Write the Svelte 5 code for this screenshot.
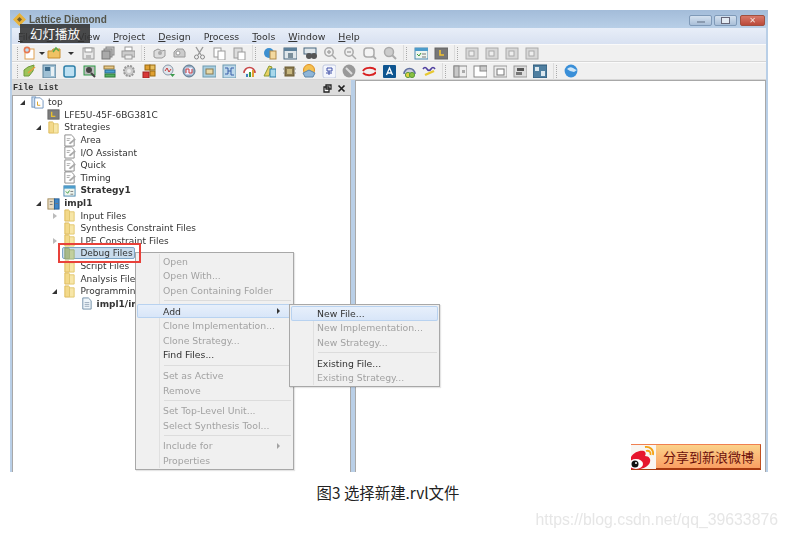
<script>
    const g = "#9a9a9a"
    const rect = (x, y, w, h, f, s = "none") => `<rect x="${x}" y="${y}" width="${w}" height="${h}" fill="${f}" stroke="${s}"/>`

    const icons = {
        newfile: rect(3, 3, 9, 10, "#fff", "#e0a050") + `<circle cx="5" cy="4" r="3.4" fill="#e87850"/><circle cx="5" cy="4" r="1.8" fill="#bfe0f5"/>`,
        open: `<path d="M1 5h4l1-2h7v9H1z" fill="#f0c264" stroke="#c98e2e"/><path d="M6 6l3-4 3 3" fill="none" stroke="#5aa84a" stroke-width="1.6"/>`,
        arrow: `<path d="M4 6h6l-3 3z" fill="#333"/>`,
        save: rect(2, 2, 11, 11, "#e8e8e8", g) + rect(4, 2, 7, 4, "#fff", g) + rect(5, 9, 5, 4, "#bbb"),
        saveall: rect(5, 1, 8, 8, "#ccc", "#888") + rect(3, 3, 8, 8, "#bbb", "#888") + rect(1, 5, 8, 8, "#aaa", "#777"),
        print: rect(4, 1, 7, 4, "#fff", g) + rect(1, 5, 13, 6, "#ccc", g) + rect(4, 9, 7, 4, "#eee", g),
        gear1: `<path d="M2 11V5l4-2 4 2 3-1v6l-3 2H4z" fill="#ddd" stroke="${g}"/><circle cx="8" cy="7" r="2" fill="#aaa"/>`,
        gear2: `<path d="M2 6l3-3h6l2 3v5H2z" fill="#ccc" stroke="${g}"/><circle cx="6" cy="7" r="2" fill="#fff" stroke="${g}"/>`,
        cut: `<path d="M4 1l5 8M11 1L6 9" stroke="#999" stroke-width="1.4" fill="none"/><circle cx="4.500" cy="11" r="2" fill="none" stroke="#888"/><circle cx="10.500" cy="11" r="2" fill="none" stroke="#888"/>`,
        copy: rect(2, 2, 7, 9, "#fff", g) + rect(6, 5, 7, 9, "#fff", g),
        paste: rect(2, 2, 8, 10, "#ddd", g) + rect(6, 6, 7, 8, "#fff", g),
        globefile: `<circle cx="6" cy="7" r="5" fill="#3d8fd0"/>` + rect(7, 5, 6, 8, "#f3d9a0", "#b08a4a"),
        board: rect(1, 2, 13, 11, "#dfe6ea", "#49677f") + rect(1, 2, 13, 3, "#5c7f99") + rect(5, 7, 5, 5, "#7b8f9b"),
        binoc: rect(1, 2, 12, 6, "#dfe6ea", "#49677f") + `<circle cx="6" cy="10" r="3" fill="#555"/><circle cx="11" cy="10" r="3" fill="#555"/>`,
        zoomin: `<circle cx="6" cy="6" r="4.200" fill="#eee" stroke="#aaa" stroke-width="1.500"/><path d="M9 9l4 4M4 6h4M6 4v4" stroke="#aaa" stroke-width="1.500"/>`,
        zoomout: `<circle cx="6" cy="6" r="4.200" fill="#eee" stroke="#aaa" stroke-width="1.500"/><path d="M9 9l4 4M4 6h4" stroke="#aaa" stroke-width="1.500"/>`,
        zoomfit: `<rect x="1" y="2" width="10" height="9" rx="3" fill="#f4f4f4" stroke="#aaa" stroke-width="1.500"/><path d="M10 10l3 3" stroke="#aaa" stroke-width="1.800"/>`,
        zoomsel: `<circle cx="6" cy="6" r="4.500" fill="#ccc" stroke="#aaa" stroke-width="1.500"/><path d="M9 9l4 4" stroke="#aaa" stroke-width="2"/>`,
        check: rect(1, 2, 13, 11, "#eef5ee", "#4a88b0") + rect(1, 2, 13, 3, "#4c9ccb") + `<path d="M3 8l2 2 2-3" stroke="#3a9a3a" fill="none"/><path d="M8 8h4M8 11h4" stroke="#777"/>`,
        chip: rect(1, 2, 13, 11, "#777", "#666") + `<path d="M6 4v5h4" stroke="#f2c230" stroke-width="1.600" fill="none"/>`,
        ghost: rect(1, 2, 12, 11, "#d8d8d8", "#aaa") + rect(4, 5, 5, 5, "#eee", "#aaa"),
        pencil: `<path d="M2 12V6l4-3 6-2-1 6-4 5z" fill="#9dc45a" stroke="#6f9a3a"/><path d="M6 9l7-6" stroke="#e8a040" stroke-width="1.600"/>`,
        pins: rect(1, 1, 13, 13, "#9fc0d4", "#5d8199") + rect(3, 3, 5, 4, "#3d6a8a") + rect(9, 3, 3, 9, "#e8f0f4"),
        blue: `<rect x="2" y="2" width="11" height="11" rx="2" fill="#bde0f2" stroke="#2d7fa8" stroke-width="1.500"/>`,
        scope: rect(2, 2, 11, 9, "#bbb", "#2c9a45") + `<circle cx="7" cy="6" r="3" fill="#444"/><path d="M9 9l4 4" stroke="#444" stroke-width="2"/>`,
        stack: rect(2, 2, 10, 3, "#e6c98a", "#997a3a") + rect(3, 6, 10, 3, "#4aa0d0", "#2a6a90") + rect(3, 10, 10, 3, "#55b060", "#2c7a3a"),
        cog: `<circle cx="7" cy="7" r="5" fill="#ccc" stroke="#999" stroke-width="2" stroke-dasharray="2 1"/><circle cx="7" cy="7" r="2" fill="#eee"/>`,
        blocks: rect(3, 1, 5, 5, "#e0a030", "#9a6a10") + rect(8, 1, 5, 5, "#e8c060", "#9a6a10") + rect(8, 7, 5, 5, "#e0a030", "#9a6a10") + rect(1, 8, 6, 6, "#d83838", "#a02020"),
        wave: `<circle cx="6" cy="6" r="5" fill="#dfe4ea" stroke="#8a9aaa"/><path d="M3 7l2-3 2 4 2-3" stroke="#c83838" fill="none"/><path d="M8 10h5l-2.500 3z" fill="#3a9a4a"/>`,
        wave2: `<circle cx="7" cy="7" r="6" fill="#8fa8bf" stroke="#60788f"/><rect x="3.500" y="3.500" width="7" height="7" fill="#eef"/><path d="M4 9V5h3v4h3V5" stroke="#c83838" fill="none"/>`,
        panel: rect(1, 2, 13, 11, "#a9cfe0", "#6d9ab0") + rect(4, 5, 7, 5, "#e8d9a8", "#8a7a50"),
        grid: rect(1, 1, 13, 13, "#bcd8ea", "#6d9ab0") + `<path d="M3 4h3v3h3V4h3M3 10h3V7M9 7v4h3" stroke="#3b5fa8" fill="none"/>`,
        gauge: `<path d="M2 9a5.500 5.500 0 0 1 11 0" fill="#fff" stroke="#c84848" stroke-width="1.600"/>` + rect(7, 8, 2, 5, "#3a9a3a") + rect(10, 6, 2, 7, "#e0a030") + rect(4, 10, 2, 3, "#3d7fc0"),
        draw: `<path d="M2 12L7 2l3 1-3 9z" fill="#e8d060" stroke="#8a9a30"/>` + rect(8, 5, 6, 8, "#a8d8ea", "#2d7fa8"),
        cpu: rect(3, 3, 9, 9, "#8a7a50", "#6a5a30") + rect(5, 5, 5, 5, "#c8b880") + `<path d="M1 5h2M1 9h2M12 5h2M12 9h2" stroke="#999"/>`,
        sun: `<circle cx="7" cy="6" r="5.500" fill="#f4c050" stroke="#e09020"/><path d="M1 9l6-3 6 3-2 4H3z" fill="#8fb6d8" stroke="#5d86a8"/>`,
        star: `<rect x="1" y="1" width="13" height="13" rx="2" fill="#f4f6fc" stroke="#c0c8e0"/><path d="M5 4h5v3H5zM7 7v4M4 9h6" stroke="#4050a8" fill="none"/>`,
        wrench: `<circle cx="7" cy="7" r="6.400" fill="#999"/><path d="M4 4l6 6" stroke="#ddd" stroke-width="2"/>`,
        swirl: `<path d="M1 7c2-4 10-4 13-1" fill="none" stroke="#d82020" stroke-width="2"/><path d="M14 8c-2 4-10 4-13 1" fill="none" stroke="#d82020" stroke-width="2"/>`,
        letter: `<rect x="1" y="1" width="13" height="13" rx="1" fill="#0e5590"/><path d="M4.500 11l3-7 3 7M5.500 9h4" stroke="#fff" stroke-width="1.300" fill="none"/>`,
        dome: `<path d="M2 10a5.500 5.500 0 0 1 11 0" fill="#ccd" stroke="#6070a0" stroke-width="1.500"/><circle cx="6" cy="11" r="2.600" fill="#e0d040" stroke="#5a9a3a"/><circle cx="10" cy="11" r="2.600" fill="#8ac040" stroke="#5a9a3a"/>`,
        squiggle: `<path d="M1 5q2-3 4 0t4 0 4 0" fill="none" stroke="#5040a0" stroke-width="1.600"/><path d="M3 11l9-4" stroke="#e8c830" stroke-width="2.400"/>`,
        split1: rect(1, 2, 13, 11, "#eee", "#888") + rect(1, 2, 5, 11, "#c8c8c8", "#888") + rect(9, 6, 3, 3, "#aaa"),
        split2: rect(1, 2, 13, 11, "#fff", "#888") + rect(7, 2, 7, 5, "#ccc", "#888"),
        split3: rect(1, 2, 13, 11, "#eee", "#999") + rect(4, 5, 7, 6, "#fff", "#777"),
        split4: rect(1, 2, 13, 11, "#ddd", "#999") + rect(4, 4, 7, 3, "#555") + rect(3, 8, 6, 3, "#777"),
        split5: rect(0, 1, 14, 13, "#4f7fa0", "#2d5878") + rect(2, 3, 4, 4, "#dce8ef") + rect(8, 7, 4, 5, "#dce8ef"),
        earth: `<circle cx="7" cy="7" r="6.400" fill="#3a8fd8"/><path d="M3 5q3-3 6-1t4 2l-3 2-4-1z" fill="#cfe6f7"/>`,
        // tree icons
        folder: `<path d="M2 1h4l1 1v11H2z" fill="#f3d98a" stroke="#dcb95a"/><path d="M7 3h5v10H7z" fill="#f7e6a8" stroke="#e2c76e"/>`,
        folderSel: `<path d="M2 1h4l1 1v11H2z" fill="#a7b98a" stroke="#8a9f6a"/><path d="M7 3h5v10H7z" fill="#c2cf9e" stroke="#a1b27c"/>`,
        topdoc: rect(1, 1, 4, 11, "#cfe0f2", "#6f94bd") + `<path d="M4 2h6l3 3v8H4z" fill="#fff" stroke="#6f94bd"/><path d="M7 6v4h3" stroke="#d9a020" fill="none"/>`,
        device: rect(1, 2, 12, 10, "#7d7d7d", "#666") + `<path d="M5 4v5h4" stroke="#e8c030" stroke-width="1.500" fill="none"/>`,
        strat: `<path d="M2 1h7l3 3v9H2z" fill="#fff" stroke="#888"/><path d="M6 10l6-5 2 1-6 5z" fill="#aaa"/><path d="M4 5h4M4 7h3" stroke="#aaa"/>`,
        stratOn: rect(1, 2, 12, 11, "#eef5ee", "#4a88b0") + rect(1, 2, 12, 3, "#4c9ccb") + `<path d="M3 8l2 2 2-3" stroke="#3a9a3a" fill="none"/><path d="M8 8h3M8 11h3" stroke="#777"/>`,
        impl: rect(1, 2, 7, 11, "#e8dcc4", "#a08a5a") + rect(8, 2, 5, 11, "#3f86c8", "#2a6096") + `<path d="M3 5h3M3 8h3M9 7h3" stroke="#777"/>`,
        doc: `<path d="M3 1h6l3 3v9H3z" fill="#eef5fa" stroke="#6f8ea8"/><path d="M5 6h5M5 8h5M5 10h5" stroke="#9ab"/>`
    }

    const bar1 = [
        ["grip"], ["newfile"], ["arrow", "narrow"], ["open"], ["arrow", "wide"], ["save"], ["saveall"], ["print"], ["sep"], ["grip"],
        ["gear1"], ["gear2"], ["cut"], ["copy"], ["paste"], ["sep"], ["grip"],
        ["globefile"], ["board"], ["binoc"], ["zoomin"], ["zoomout"], ["zoomfit"], ["zoomsel"], ["sep"], ["grip"],
        ["check"], ["chip"], ["sep"], ["grip"], ["ghost"], ["ghost"], ["ghost"], ["ghost"]
    ]
    const bar2 = [
        ["grip"], ["pencil"], ["pins"], ["blue"], ["scope"], ["stack"], ["cog"], ["blocks"], ["wave"], ["wave2"], ["panel"], ["grid"],
        ["gauge"], ["draw"], ["cpu"], ["sun"], ["star"], ["wrench"], ["swirl"], ["letter"], ["dome"], ["squiggle"], ["sep"], ["grip"],
        ["split1"], ["split2"], ["split3"], ["split4"], ["split5"], ["sep"], ["grip"], ["earth"]
    ]

    const tree = [
        { d: 0, exp: "open", icon: "topdoc", text: "top" },
        { d: 1, icon: "device", text: "LFE5U-45F-6BG381C" },
        { d: 1, exp: "open", icon: "folder", text: "Strategies" },
        { d: 2, icon: "strat", text: "Area" },
        { d: 2, icon: "strat", text: "I/O Assistant" },
        { d: 2, icon: "strat", text: "Quick" },
        { d: 2, icon: "strat", text: "Timing" },
        { d: 2, icon: "stratOn", text: "Strategy1", bold: true },
        { d: 1, exp: "open", icon: "impl", text: "impl1", bold: true },
        { d: 2, exp: "closed", icon: "folder", text: "Input Files" },
        { d: 2, icon: "folder", text: "Synthesis Constraint Files" },
        { d: 2, exp: "closed", icon: "folder", text: "LPE Constraint Files" },
        { d: 2, icon: "folderSel", text: "Debug Files", sel: true },
        { d: 2, icon: "folder", text: "Script Files" },
        { d: 2, icon: "folder", text: "Analysis Files" },
        { d: 2, exp: "open", icon: "folder", text: "Programming Files" },
        { d: 3, icon: "doc", text: "impl1/impl1.xcf", bold: true }
    ]

    const menu = [
        [{ t: "Open" }, { t: "Open With..." }, { t: "Open Containing Folder" }],
        [{ t: "Add", on: true, hot: true, more: true }, { t: "Clone Implementation..." }, { t: "Clone Strategy..." }, { t: "Find Files...", on: true }],
        [{ t: "Set as Active" }, { t: "Remove" }],
        [{ t: "Set Top-Level Unit..." }, { t: "Select Synthesis Tool..." }],
        [{ t: "Include for", more: true }, { t: "Properties" }]
    ]
    const submenu = [
        [{ t: "New File...", on: true, hot: true }, { t: "New Implementation..." }, { t: "New Strategy..." }],
        [{ t: "Existing File...", on: true }, { t: "Existing Strategy..." }]
    ]
</script>

{#snippet ico(name, size = 14)}
    <svg class="ico" width={size} height={size} viewBox="0 0 14 14">{@html icons[name]}</svg>
{/snippet}

{#snippet toolbar(items)}
    <div class="toolbar">
        {#each items as [kind, width]}
            {#if kind === "grip"}
                <span class="grip"></span>
            {:else if kind === "sep"}
                <span class="sep"></span>
            {:else}
                <span class="tool {width ?? ''}">{@render ico(kind)}</span>
            {/if}
        {/each}
    </div>
{/snippet}

{#snippet popup(groups, cls)}
    <div class="popup {cls}">
        {#each groups as group, i}
            {#if i > 0}<div class="rule"></div>{/if}
            {#each group as item}
                <div class="item" class:on={item.on} class:hot={item.hot}>
                    <span>{item.t}</span>
                    {#if item.more}<i class="more"></i>{/if}
                </div>
            {/each}
        {/each}
    </div>
{/snippet}

<div class="page">
    <div class="frame">
        <div class="window">
            <div class="titlebar">
                <svg class="logo" width="13" height="13" viewBox="0 0 13 13"><path d="M6.500 0L13 6.500 6.500 13 0 6.500z" fill="#e8b23a"/><path d="M6.500 4L9 6.500 6.500 9 4 6.500z" fill="#6a5a30"/></svg>
                <span class="title">Lattice Diamond</span>
                <div class="controls">
                    <span class="ctl"><b></b></span>
                    <span class="ctl"><b class="box"></b></span>
                    <span class="ctl close">✕</span>
                </div>
            </div>
            <div class="menubar">
                <span><u>F</u>ile</span><span><u>E</u>dit</span><span><u>V</u>iew</span><span><u>P</u>roject</span><span><u>D</u>esign</span><span>P<u>r</u>ocess</span><span><u>T</u>ools</span><span><u>W</u>indow</span><span><u>H</u>elp</span>
            </div>
            {@render toolbar(bar1)}
            {@render toolbar(bar2)}
            <div class="panes">
                <div class="left">
                    <div class="panehead">
                        <span>File List</span>
                        <svg width="9" height="9" viewBox="0 0 9 9"><path d="M3 1h5v4H3zM1 3h5v5H1z" fill="#fff" stroke="#222" stroke-width="1.300"/></svg>
                        <svg width="9" height="9" viewBox="0 0 9 9"><path d="M1.500 1.500l6 6M7.500 1.500l-6 6" stroke="#222" stroke-width="1.700"/></svg>
                    </div>
                    <div class="tree">
                        {#each tree as row}
                            <div class="row" style="padding-left: {1 + row.d * 16.2}px">
                                <span class="exp {row.exp ?? ''}"></span>
                                <span class="cell" class:sel={row.sel}>
                                    {@render ico(row.icon, 13)}
                                    <span class="label" class:bold={row.bold}>{row.text}</span>
                                </span>
                            </div>
                        {/each}
                    </div>
                </div>
                <div class="right"></div>
            </div>
            {@render popup(menu, "main")}
            {@render popup(submenu, "sub")}
        </div>
        <div class="slide">幻灯播放</div>
        <div class="mark"></div>
        <div class="weibo">
            <svg width="25" height="26" viewBox="0 0 25 26">
                <rect width="25" height="26" fill="#f8f6f2"/>
                <path d="M0 0h25v1H0z" fill="#f08050"/>
                <path d="M0 13C3 8 9 6 13 7c2 1 2 3 1 5 4 0 6 3 5 6-1 5-9 8-19 8z" fill="#e6162d"/>
                <ellipse cx="5" cy="20" rx="7" ry="5" fill="#fff"/>
                <circle cx="4" cy="20" r="3.500" fill="#111"/>
                <circle cx="5" cy="19" r="1" fill="#fff"/>
                <path d="M14 3c5-1 9 3 8 8M15 7c3-1 5 1 4.500 4" fill="none" stroke="#f4a316" stroke-width="1.800"/>
                <path d="M0 25h25v1H0z" fill="#a83a10"/>
            </svg>
            <span>分享到新浪微博</span>
        </div>
    </div>
    <p class="caption">图3 选择新建.rvl文件</p>
    <div class="watermark">https://blog.csdn.net/qq_39633876</div>
</div>

<style>
    :global(body) {
        background: #fff;
        font-family: "DejaVu Sans", sans-serif;
    }
    .page {
        position: relative;
        width: 787px;
        height: 537px;
        overflow: hidden;
        padding: 10px 0 0 10px;
        box-sizing: border-box;
    }
    .frame {
        position: relative;
        width: 758px;
        height: 462px;
    }
    .window {
        position: relative;
        height: 100%;
        overflow: hidden;
        background: #b9cfe7;
        padding: 0 2px;
        box-sizing: border-box;
        filter: blur(0.7px);
        color: #222;
    }
    .titlebar {
        display: flex;
        align-items: center;
        height: 18px;
        margin: 0 -2px;
        padding: 0 3px 0 3px;
        background: linear-gradient(#a3bcd9, #b8cfe7);
    }
    .logo {
        margin-right: 3px;
    }
    .title {
        font-family: "Liberation Sans", sans-serif;
        font-size: 10px;
        font-weight: bold;
        color: #55554a;
    }
    .controls {
        display: flex;
        gap: 2px;
        margin-left: auto;
        margin-top: 2px;
    }
    .ctl {
        display: flex;
        align-items: center;
        justify-content: center;
        width: 23px;
        height: 11px;
        border: 1px solid #7f9ab8;
        border-radius: 2px;
        box-sizing: border-box;
        background: linear-gradient(#d4e1ef, #a9bfd8);
    }
    .ctl b {
        width: 8px;
        height: 2px;
        margin-top: 3px;
        background: #8a9bb0;
    }
    .ctl b.box {
        width: 7px;
        height: 5px;
        margin-top: 0;
        background: #e4ebf3;
        border: 1px solid #667;
    }
    .close {
        width: 25px;
        margin-left: 1px;
        font-size: 8px;
        font-weight: bold;
        color: #f3e2dc;
        border-color: #a05040;
        background: linear-gradient(#d8796a, #bb4a3a);
    }
    .menubar {
        display: flex;
        gap: 13px;
        height: 16px;
        padding-left: 6px;
        align-items: center;
        background: linear-gradient(#e8eef8, #d8e1f1);
        font-size: 9.400px;
        color: #333;
    }
    .toolbar {
        display: flex;
        align-items: center;
        height: 18px;
        background: #f0f0f0;
        border-top: 1px solid #fafafa;
        border-bottom: 1px solid #d6d6d6;
        box-sizing: border-box;
        padding-left: 3px;
    }
    .tool {
        display: flex;
        flex: none;
        justify-content: center;
        width: 20px;
    }
    .tool.narrow {
        width: 5px;
    }
    .tool.wide {
        width: 14px;
    }
    .ico {
        display: block;
        flex: none;
    }
    .grip {
        flex: none;
        width: 1px;
        height: 13px;
        margin: 0 3px 0 2px;
        border-left: 1px dotted #aaa;
    }
    .grip:first-child {
        margin-right: 0;
    }
    .sep {
        flex: none;
        width: 1px;
        height: 17px;
        margin-left: 3px;
        background: #dcdcdc;
    }
    .panes {
        display: flex;
        gap: 4px;
        height: 392px;
    }
    .left {
        width: 339px;
        flex: none;
    }
    .panehead {
        display: flex;
        align-items: center;
        gap: 5px;
        height: 15px;
        padding: 1px 5px 0 1px;
        box-sizing: border-box;
        background: #dcdcdc;
        font-family: "Liberation Mono", monospace;
        font-size: 8.500px;
        font-weight: bold;
        color: #333;
    }
    .panehead span {
        margin-right: auto;
    }
    .tree {
        height: 377px;
        background: #fff;
        border: 1px solid #a8a8a8;
        border-bottom: 0;
        box-sizing: border-box;
    }
    .row {
        display: flex;
        align-items: center;
        height: 12.600px;
        font-size: 9px;
        color: #333;
    }
    .exp {
        flex: none;
        width: 17px;
        display: flex;
        justify-content: center;
    }
    .exp.open::before {
        content: "";
        width: 0;
        height: 0;
        border-left: 5px solid transparent;
        border-bottom: 5px solid #333;
    }
    .exp.closed::before {
        content: "";
        width: 0;
        height: 0;
        border-top: 3px solid transparent;
        border-bottom: 3px solid transparent;
        border-left: 4px solid #bbb;
    }
    .cell {
        display: flex;
        align-items: center;
        gap: 4px;
        box-sizing: border-box;
        height: 12.600px;
    }
    .label {
        white-space: nowrap;
    }
    .bold {
        font-weight: bold;
    }
    .sel {
        margin-left: -1px;
        padding: 0 1px 0 0;
        height: 12px;
        background: #c8dbec;
        border: 1px solid #7ea6c8;
        border-radius: 2px;
    }
    .right {
        flex: 1;
        background: #fff;
        border: 1px solid #a8a8a8;
        border-bottom: 0;
    }
    .popup {
        position: absolute;
        box-sizing: border-box;
        background: #f0f0f0;
        border: 1px solid #a8a8a8;
        font-size: 9.300px;
        color: #a2a2a2;
        padding: 1px 0;
        box-shadow: 1px 1px 1px rgba(0, 0, 0, 0.1);
    }
    .main {
        left: 125px;
        top: 242px;
        width: 159px;
        height: 218px;
    }
    .sub {
        left: 279px;
        top: 294px;
        width: 151px;
        height: 83px;
    }
    .main::before,
    .sub::before {
        content: "";
        position: absolute;
        left: 23px;
        top: 1px;
        bottom: 1px;
        border-left: 1px solid #e0e0e0;
    }
    .item {
        position: relative;
        display: flex;
        align-items: center;
        justify-content: space-between;
        height: 14.600px;
        padding: 0 12px 0 26px;
        margin: 0 1px;
    }
    .on {
        color: #333;
    }
    .hot {
        background: linear-gradient(#e8f0fb, #d7e5f8);
        box-shadow: inset 0 0 0 1px #b8d2f0;
        border-radius: 2px;
    }
    .more {
        width: 0;
        height: 0;
        border-top: 3px solid transparent;
        border-bottom: 3px solid transparent;
        border-left: 3px solid currentColor;
    }
    .rule {
        height: 1px;
        margin: 2.500px 2px 2.500px 28px;
        background: #dcdcdc;
    }
    .slide {
        position: absolute;
        left: 10px;
        top: 14px;
        width: 70px;
        height: 19px;
        line-height: 19px;
        text-align: center;
        font-family: "Noto Sans CJK SC", sans-serif;
        font-size: 12.500px;
        color: #fff;
        background: rgba(50, 50, 50, 0.88);
    }
    .mark {
        position: absolute;
        left: 48px;
        top: 233px;
        width: 83px;
        height: 20px;
        box-sizing: border-box;
        border: 2px solid #e8413a;
    }
    .weibo {
        position: absolute;
        left: 621px;
        top: 434px;
        display: flex;
        height: 26px;
        width: 130px;
    }
    .weibo span {
        flex: 1;
        box-sizing: border-box;
        padding-left: 7px;
        line-height: 24px;
        font-family: "Noto Sans CJK SC", sans-serif;
        font-size: 13px;
        color: #6b0f0a;
        background: linear-gradient(#fbd28a, #fa9f63);
        border-top: 1px solid #f08050;
        border-right: 1px solid #c05020;
        border-bottom: 2px solid #a83a10;
    }
    .caption {
        margin: 9px 0 0 0;
        width: 756px;
        text-align: center;
        font-family: "Noto Sans CJK SC", sans-serif;
        font-size: 15.400px;
        color: #222;
    }
    .watermark {
        position: absolute;
        right: 9px;
        top: 511px;
        font-family: "Liberation Sans", sans-serif;
        font-size: 15.800px;
        color: #e6e6e6;
        filter: blur(0.4px);
    }
</style>
